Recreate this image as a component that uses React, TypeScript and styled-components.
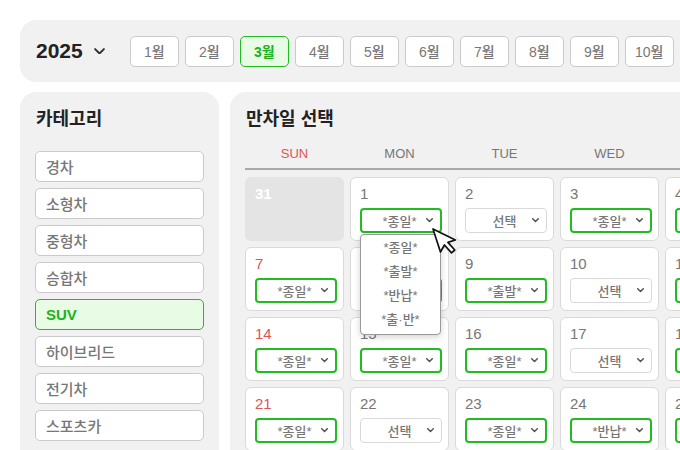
import React from 'react'
import styled, { createGlobalStyle } from 'styled-components'

const GREEN = '#22bb22'
const GREEN_TEXT = '#1cb01c'
const GREEN_BG = '#e7fbe5'

const months = ['1월', '2월', '3월', '4월', '5월', '6월', '7월', '8월', '9월', '10월', '11월', '12월']
const categories = ['경차', '소형차', '중형차', '승합차', 'SUV', '하이브리드', '전기차', '스포츠카']
const weekDays = ['SUN', 'MON', 'TUE', 'WED', 'THU', 'FRI', 'SAT']
const options = ['*종일*', '*출발*', '*반납*', '*출·반*']

type Day = { n: number; v?: string; prev?: boolean; open?: boolean }

// v: empty = 선택 (nothing picked yet)
const weeks: Day[][] = [
    [{ n: 31, prev: true }, { n: 1, v: '*종일*', open: true }, { n: 2 }, { n: 3, v: '*종일*' }, { n: 4, v: '*종일*' }, { n: 5 }, { n: 6, v: '*종일*' }],
    [{ n: 7, v: '*종일*' }, { n: 8, v: '*종일*' }, { n: 9, v: '*출발*' }, { n: 10 }, { n: 11, v: '*종일*' }, { n: 12 }, { n: 13 }],
    [{ n: 14, v: '*종일*' }, { n: 15, v: '*종일*' }, { n: 16, v: '*종일*' }, { n: 17 }, { n: 18, v: '*종일*' }, { n: 19 }, { n: 20 }],
    [{ n: 21, v: '*종일*' }, { n: 22 }, { n: 23, v: '*종일*' }, { n: 24, v: '*반납*' }, { n: 25, v: '*종일*' }, { n: 26 }, { n: 27 }],
    [{ n: 28 }, { n: 29 }, { n: 30 }, { n: 31 }, { n: 1, prev: true }, { n: 2, prev: true }, { n: 3, prev: true }],
]

const GlobalStyle = createGlobalStyle`
  html, body {
    margin: 0;
    background: #fff;
    overflow: hidden;
  }
  body {
    font-family: "Liberation Sans", "Noto Sans CJK KR", sans-serif;
    font-weight: 500;
    color: #777;
  }
`

const Page = styled.div`
width: 969px;
padding: 20px 0 0 20px;
display: flex;
flex-direction: column;
gap: 10px;
`

const TopBar = styled.div`
height: 62px;
box-sizing: border-box;
background: #f1f1f1;
border-radius: 16px;
display: flex;
align-items: center;
padding: 0 16px;
`

const YearPicker = styled.div`
display: flex;
align-items: center;
gap: 11px;
font-size: 21px;
font-weight: 700;
color: #222;
margin-right: 25px;
`

const MonthList = styled.div`
display: flex;
gap: 6px;
`

const MonthButton = styled.div<{ $active?: boolean }>`
width: 49px;
height: 31px;
box-sizing: border-box;
display: flex;
align-items: center;
justify-content: center;
border-radius: 5px;
font-size: 14px;
background: ${p => p.$active ? GREEN_BG : '#fff'};
border: 1px solid ${p => p.$active ? GREEN : '#cacaca'};
color: ${p => p.$active ? GREEN_TEXT : '#777'};
font-weight: ${p => p.$active ? 700 : 500};
`

const Main = styled.div`
display: grid;
grid-template-columns: 199px 759px;
gap: 11px;
align-items: start;
`

const Panel = styled.div`
background: #f1f1f1;
border-radius: 16px;
padding: 15px;
height: 380px;
`

const PanelTitle = styled.h2`
margin: 0 0 0 1px;
font-size: 18px;
line-height: 24px;
font-weight: 700;
color: #222;
`

const CategoryList = styled.div`
margin-top: 20px;
display: flex;
flex-direction: column;
gap: 6px;
`

const CategoryItem = styled.div<{ $active?: boolean }>`
height: 31px;
box-sizing: border-box;
display: flex;
align-items: center;
padding-left: 10px;
border-radius: 5px;
font-size: 15px;
background: ${p => p.$active ? GREEN_BG : '#fff'};
border: 1px solid ${p => p.$active ? GREEN : '#cacaca'};
color: ${p => p.$active ? GREEN_TEXT : '#777'};
font-weight: ${p => p.$active ? 700 : 500};
`

const WeekHeader = styled.div`
margin-top: 15px;
display: grid;
grid-template-columns: repeat(7, 99px);
column-gap: 6px;
padding-bottom: 6px;
border-bottom: 2px solid #a9a9a9;
`

const WeekDay = styled.div<{ $sun?: boolean }>`
text-align: center;
font-size: 13px;
line-height: 16px;
color: ${p => p.$sun ? '#e05454' : '#777'};
`

const DayGrid = styled.div`
margin-top: 7px;
display: grid;
grid-template-columns: repeat(7, 99px);
grid-auto-rows: 64px;
gap: 6px;
`

const Cell = styled.div<{ $muted?: boolean }>`
box-sizing: border-box;
border-radius: 6px;
padding: 7px 6px 0 9px;
border: 1px solid ${p => p.$muted ? '#e4e4e4' : '#dadada'};
background: ${p => p.$muted ? '#e4e4e4' : '#fff'};
display: flex;
flex-direction: column;
gap: 5px;
`

const DayNum = styled.div<{ $sun?: boolean; $muted?: boolean }>`
font-size: 15px;
line-height: 18px;
font-weight: ${p => p.$muted ? 700 : 500};
color: ${p => p.$muted ? '#fff' : p.$sun ? '#e05454' : '#777'};
`

const SelectBox = styled.div<{ $on?: boolean }>`
position: relative;
height: 25px;
box-sizing: border-box;
display: grid;
grid-template-columns: 1fr auto 1fr;
align-items: center;
padding: 0 7px 0 4px;
border-radius: 4px;
background: #fff;
border: ${p => p.$on ? `2px solid ${GREEN}` : '1px solid #d9d9d9'};
font-size: 13px;
color: #777;
`

const SelectText = styled.span`
grid-column: 2;
white-space: nowrap;
`

const SelectArrow = styled.span`
grid-column: 3;
justify-self: end;
display: flex;
`

const Menu = styled.div`
position: absolute;
z-index: 5;
top: 24px;
left: -2px;
width: 81px;
box-sizing: border-box;
padding: 1px 0 2px;
background: #fff;
border: 1px solid #9a9a9a;
border-radius: 4px;
box-shadow: 0 2px 6px rgba(0, 0, 0, 0.18);
`

const MenuItem = styled.div`
height: 24px;
line-height: 24px;
text-align: center;
font-size: 13px;
color: #777;
`

const Cursor = styled.svg`
position: absolute;
z-index: 6;
left: 69px;
top: 17px;
`

const Chevron = ({ size = 7, stroke = '#555', width = 1.5 }: { size?: number; stroke?: string; width?: number }) => (
    <svg width={size} height={size * 0.6} viewBox="0 0 10 6" fill="none">
        <path d="M1 1 L5 5 L9 1" stroke={stroke} strokeWidth={width * 10 / size} strokeLinecap="round" strokeLinejoin="round" />
    </svg>
)

const Arrow = () => (
    <Cursor width="36" height="36" viewBox="0 0 36 36">
        <g transform="translate(2 2) rotate(-18) scale(1.42)">
            <path d="M0 0 L0 17 L4.2 13.2 L7.2 20 L10 18.8 L7.1 12.2 L12.6 12.2 Z" fill="#fff" stroke="#111" strokeWidth="1.2" strokeLinejoin="round" />
        </g>
    </Cursor>
)

const DaySelect = ({ day }: { day: Day }) => (
    <SelectBox $on={!!day.v}>
        <SelectText>{day.v || '선택'}</SelectText>
        <SelectArrow><Chevron /></SelectArrow>
        {day.open && (
            <>
                <Menu>
                    {options.map(o => <MenuItem key={o}>{o}</MenuItem>)}
                </Menu>
                <Arrow />
            </>
        )}
    </SelectBox>
)

const App = () => {
    return (
        <Page>
            <GlobalStyle />
            <TopBar>
                <YearPicker>
                    2025
                    <Chevron size={11} stroke="#333" width={2} />
                </YearPicker>
                <MonthList>
                    {months.map(m => (
                        <MonthButton key={m} $active={m === '3월'}>{m}</MonthButton>
                    ))}
                </MonthList>
            </TopBar>
            <Main>
                <Panel>
                    <PanelTitle>카테고리</PanelTitle>
                    <CategoryList>
                        {categories.map(c => (
                            <CategoryItem key={c} $active={c === 'SUV'}>{c}</CategoryItem>
                        ))}
                    </CategoryList>
                </Panel>
                <Panel>
                    <PanelTitle>만차일 선택</PanelTitle>
                    <WeekHeader>
                        {weekDays.map((d, i) => <WeekDay key={d} $sun={i === 0}>{d}</WeekDay>)}
                    </WeekHeader>
                    <DayGrid>
                        {weeks.map((w, wi) => w.map((d, di) => (
                            <Cell key={`${wi}-${di}`} $muted={d.prev}>
                                <DayNum $sun={di === 0} $muted={d.prev}>{d.n}</DayNum>
                                {!d.prev && <DaySelect day={d} />}
                            </Cell>
                        )))}
                    </DayGrid>
                </Panel>
            </Main>
        </Page>
    )
}

export default App
